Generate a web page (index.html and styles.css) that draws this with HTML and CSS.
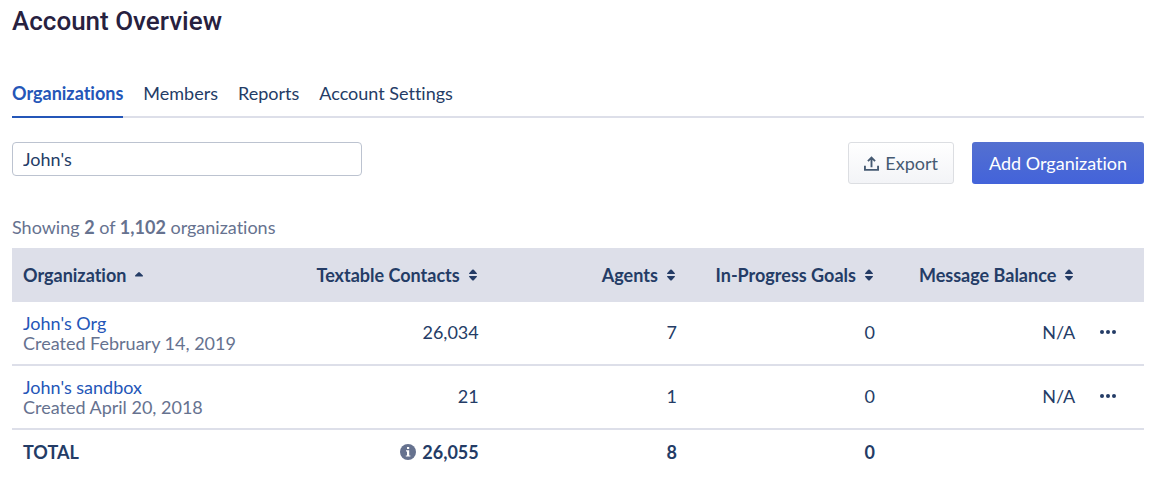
FILE: index.html
```html
<!DOCTYPE html>
<html lang="en">
<head>
  <meta charset="UTF-8" />
  <meta name="viewport" content="width=device-width, initial-scale=1.0"/>
  <title>Account Overview</title>
  <link rel="stylesheet" href="styles.css">
</head>
<body>

  <!-- Shared icons -->
  <svg class="icon-defs" aria-hidden="true">
    <symbol id="icon-sort" viewBox="0 0 8 12">
      <path d="M0.4 5Q-0.3 4.6 0.3 3.9L3.2 0.8Q4 0 4.8 0.8L7.7 3.9Q8.3 4.6 7.6 5Z M0.4 7Q-0.3 7.4 0.3 8.1L3.2 11.2Q4 12 4.8 11.2L7.7 8.1Q8.3 7.4 7.6 7Z"/>
    </symbol>
    <symbol id="icon-more" viewBox="0 0 16 4">
      <circle cx="2" cy="2" r="2"/>
      <circle cx="8" cy="2" r="2"/>
      <circle cx="14" cy="2" r="2"/>
    </symbol>
  </svg>

  <header class="page-header">
    <h1>Account Overview</h1>
  </header>

  <nav class="tabs">
    <a href="#organizations" class="tab active">Organizations</a>
    <a href="#members" class="tab">Members</a>
    <a href="#reports" class="tab">Reports</a>
    <a href="#settings" class="tab">Account Settings</a>
  </nav>

  <main>
    <div class="toolbar">
      <input type="text" class="search" value="John's" aria-label="Search organizations">
      <div class="actions">
        <button type="button" class="btn btn-export">
          <svg class="icon-export" viewBox="0 0 16 16" aria-hidden="true">
            <path d="M1 10.5V14.8H15V10.5M8 12V1.8M4.2 5.4L8 1.6L11.8 5.4"/>
          </svg>
          Export
        </button>
        <button type="button" class="btn btn-primary">Add Organization</button>
      </div>
    </div>

    <p class="summary">Showing <strong>2</strong> of <strong>1,102</strong> organizations</p>

    <table class="org-table">
      <thead>
        <tr>
          <th class="col-org">
            <button type="button" class="sort">Organization
              <svg class="icon-sort" viewBox="0 0 8 12" aria-hidden="true"><path d="M0.4 7.4Q-0.3 7 0.3 6.3L3.2 3.4Q4 2.6 4.8 3.4L7.7 6.3Q8.3 7 7.6 7.4Z"/></svg>
            </button>
          </th>
          <th class="col-contacts">
            <button type="button" class="sort">Textable Contacts <svg class="icon-sort" aria-hidden="true"><use href="#icon-sort"/></svg></button>
          </th>
          <th class="col-agents">
            <button type="button" class="sort">Agents <svg class="icon-sort" aria-hidden="true"><use href="#icon-sort"/></svg></button>
          </th>
          <th class="col-goals">
            <button type="button" class="sort">In-Progress Goals <svg class="icon-sort" aria-hidden="true"><use href="#icon-sort"/></svg></button>
          </th>
          <th class="col-balance">
            <button type="button" class="sort">Message Balance <svg class="icon-sort" aria-hidden="true"><use href="#icon-sort"/></svg></button>
          </th>
          <th class="col-menu"></th>
        </tr>
      </thead>
      <tbody>
        <tr>
          <td>
            <a href="#johns-org" class="org-name">John's Org</a>
            <div class="created">Created February 14, 2019</div>
          </td>
          <td>26,034</td>
          <td>7</td>
          <td>0</td>
          <td>N/A</td>
          <td><button type="button" class="more" aria-label="More actions"><svg class="icon-more" aria-hidden="true"><use href="#icon-more"/></svg></button></td>
        </tr>
        <tr>
          <td>
            <a href="#johns-sandbox" class="org-name">John's sandbox</a>
            <div class="created">Created April 20, 2018</div>
          </td>
          <td>21</td>
          <td>1</td>
          <td>0</td>
          <td>N/A</td>
          <td><button type="button" class="more" aria-label="More actions"><svg class="icon-more" aria-hidden="true"><use href="#icon-more"/></svg></button></td>
        </tr>
      </tbody>
      <tfoot>
        <tr>
          <td>TOTAL</td>
          <td>
            <div class="total">
              <svg class="icon-info" viewBox="0 0 16 16" aria-hidden="true">
                <circle cx="8" cy="8" r="8" fill="#66728f"/>
                <path d="M7 3H9.2V5H7Z M6 6.2H9.2V11.4H10.4V12.6H5.8V11.4H7V7.4H6Z" fill="#fff"/>
              </svg>
              26,055
            </div>
          </td>
          <td>8</td>
          <td>0</td>
          <td></td>
          <td></td>
        </tr>
      </tfoot>
    </table>
  </main>

</body>
</html>
```
FILE: styles.css
```css
* {
  box-sizing: border-box;
}

body {
  margin: 0;
  padding: 6px 14px 16px 12px;
  font-family: Lato, "Noto Sans", sans-serif;
  font-size: 18px;
  font-variant-ligatures: none;
  line-height: 20px;
  color: #243c66;
  background-color: #fff;
}

a {
  color: #2456b8;
  text-decoration: none;
}

button {
  font: inherit;
  font-variant-ligatures: none;
  color: inherit;
  cursor: pointer;
}

.icon-defs {
  display: none;
}

.page-header h1 {
  margin: 0;
  font-family: Roboto, sans-serif;
  font-size: 26px;
  font-weight: 500;
  line-height: 30px;
  color: #27213f;
}

/* TABS */
.tabs {
  display: flex;
  gap: 20px;
  margin-top: 47px;
  border-bottom: 2px solid #dddfe9;
}

.tab {
  margin-bottom: -2px;
  padding-bottom: 13px;
  color: #243c66;
  border-bottom: 2px solid transparent;
}

.tab.active {
  color: #2456b8;
  font-weight: bold;
  border-bottom-color: #2456b8;
}

/* TOOLBAR */
.toolbar {
  display: flex;
  justify-content: space-between;
  align-items: flex-start;
  margin-top: 24px;
}

.search {
  width: 350px;
  height: 34px;
  padding: 0 10px;
  font: inherit;
  color: #243c66;
  background-color: #fff;
  border: 1px solid #bcc3d0;
  border-radius: 4px;
}

.actions {
  display: flex;
  gap: 18px;
}

.btn {
  display: flex;
  align-items: center;
  gap: 6px;
  height: 42px;
  padding: 0 15px;
  border-radius: 3px;
}

.btn-export {
  color: #465a72;
  background: linear-gradient(#fff, #f3f4f7);
  border: 1px solid #dcdee2;
}

.btn-primary {
  padding: 0 17px;
  color: #fff;
  background: linear-gradient(#5470d0, #4363da);
  border: none;
}

.icon-export {
  width: 15px;
  height: 15px;
  fill: none;
  stroke: currentColor;
  stroke-width: 2;
}

.summary {
  margin: 33px 0 11px;
  color: #66728f;
}

/* TABLE */
.org-table {
  width: 100%;
  table-layout: fixed;
  border-collapse: separate;
  border-spacing: 0;
}

.org-table th,
.org-table td {
  padding: 0 11px;
  text-align: right;
}

.org-table th:first-child,
.org-table td:first-child {
  text-align: left;
}

.org-table th {
  height: 54px;
  background-color: #dddfe9;
}

.org-table tbody td {
  height: 64px;
  padding-bottom: 2px;
  border-bottom: 2px solid #dddfe9;
}

.org-table tbody td:first-child {
  padding-bottom: 0;
}

.org-table tfoot td {
  height: 44px;
  font-weight: bold;
}

.col-contacts {
  width: 18%;
}

.col-agents,
.col-goals {
  width: 17.5%;
}

.col-balance {
  width: 17.7%;
}

.col-menu {
  width: 5.1%;
}

.sort {
  display: inline-flex;
  align-items: center;
  gap: 9px;
  padding: 0 2px 0 0;
  font-weight: bold;
  white-space: nowrap;
  background: none;
  border: none;
}

.icon-sort {
  width: 8px;
  height: 12px;
  fill: currentColor;
}

.org-name {
  display: block;
}

.created {
  color: #66728f;
}

.more {
  display: flex;
  padding: 8px 3px;
  background: none;
  border: none;
}

.icon-more {
  width: 16px;
  height: 4px;
  fill: currentColor;
}

.total {
  display: flex;
  justify-content: flex-end;
  align-items: center;
  gap: 6px;
}

.icon-info {
  width: 16px;
  height: 16px;
}
```
